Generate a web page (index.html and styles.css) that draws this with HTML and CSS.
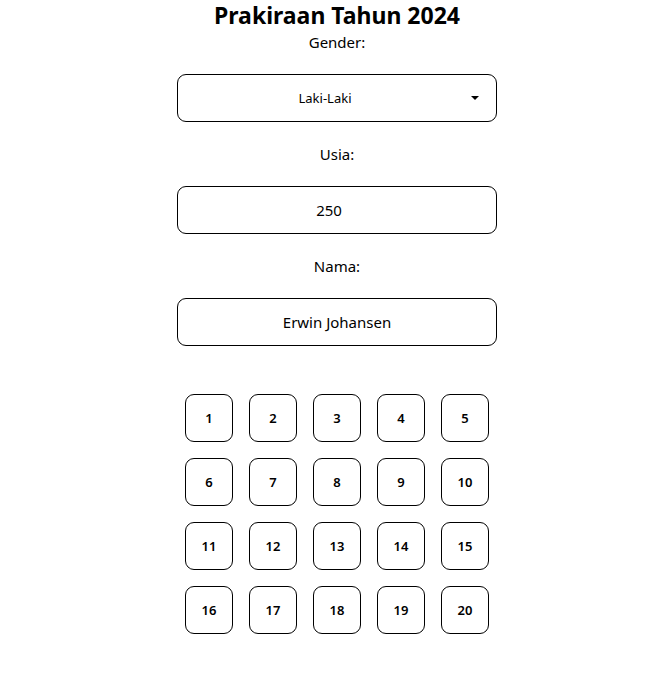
FILE: index.html
```html
<!DOCTYPE html>
<html lang="id">
<head>
    <meta charset="UTF-8">
    <meta name="viewport" content="width=device-width, initial-scale=1.0">
    <title>Prakiraan Tahun 2024</title>
    <link rel="stylesheet" href="styles.css">
</head>
<body>
<div class="container">
    <h1>Prakiraan Tahun 2024</h1>

    <label class="field-label" for="gender">Gender:</label>
    <div class="select-wrap">
        <select id="gender" class="field-input">
            <option>Laki-Laki</option>
            <option>Perempuan</option>
        </select>
    </div>

    <label class="field-label" for="usia">Usia:</label>
    <input type="text" id="usia" class="field-input number-input" value="250">

    <label class="field-label" for="nama">Nama:</label>
    <input type="text" id="nama" class="field-input" value="Erwin Johansen">

    <div class="number-grid">
        <button class="num-btn">1</button>
        <button class="num-btn">2</button>
        <button class="num-btn">3</button>
        <button class="num-btn">4</button>
        <button class="num-btn">5</button>
        <button class="num-btn">6</button>
        <button class="num-btn">7</button>
        <button class="num-btn">8</button>
        <button class="num-btn">9</button>
        <button class="num-btn">10</button>
        <button class="num-btn">11</button>
        <button class="num-btn">12</button>
        <button class="num-btn">13</button>
        <button class="num-btn">14</button>
        <button class="num-btn">15</button>
        <button class="num-btn">16</button>
        <button class="num-btn">17</button>
        <button class="num-btn">18</button>
        <button class="num-btn">19</button>
        <button class="num-btn">20</button>
    </div>
</div>
</body>
</html>
```

FILE: styles.css
```css
body {
    font-family: "Noto Sans", "Open Sans", sans-serif;
    margin: 0;
    padding: 0 0 0 7px;
    background-color: #fff;
    color: #000;
}
.container {
    width: 320px;
    margin: 0 auto;
    display: flex;
    flex-direction: column;
    align-items: center;
}
h1 {
    margin: 0 0 2px;
    font-size: 23px;
    line-height: 30px;
    font-weight: bold;
}
.field-label {
    display: block;
    font-size: 15px;
    line-height: 20px;
    margin-bottom: 22px;
}
.select-wrap {
    position: relative;
    width: 320px;
}
.select-wrap::after {
    content: "";
    position: absolute;
    right: 18px;
    top: 22px;
    border-left: 4px solid transparent;
    border-right: 4px solid transparent;
    border-top: 4px solid #000;
    pointer-events: none;
}
.field-input {
    box-sizing: border-box;
    width: 320px;
    height: 48px;
    border: 1px solid #000;
    border-radius: 9px;
    background: #fff;
    font-family: inherit;
    font-size: 15px;
    color: #000;
    text-align: center;
    margin: 0 0 22px;
    padding: 0 10px;
}
.number-input {
    padding-right: 26px;
}
select.field-input {
    appearance: none;
    -webkit-appearance: none;
    text-align-last: center;
    font-size: 13px;
    padding-right: 34px;
}
.number-grid {
    display: grid;
    grid-template-columns: repeat(5, 48px);
    gap: 16px;
    margin-top: 26px;
}
.num-btn {
    width: 48px;
    height: 48px;
    border: 1px solid #000;
    border-radius: 9px;
    background: #fff;
    font-family: inherit;
    font-size: 13px;
    font-weight: 600;
    color: #000;
    padding: 0;
}
```
